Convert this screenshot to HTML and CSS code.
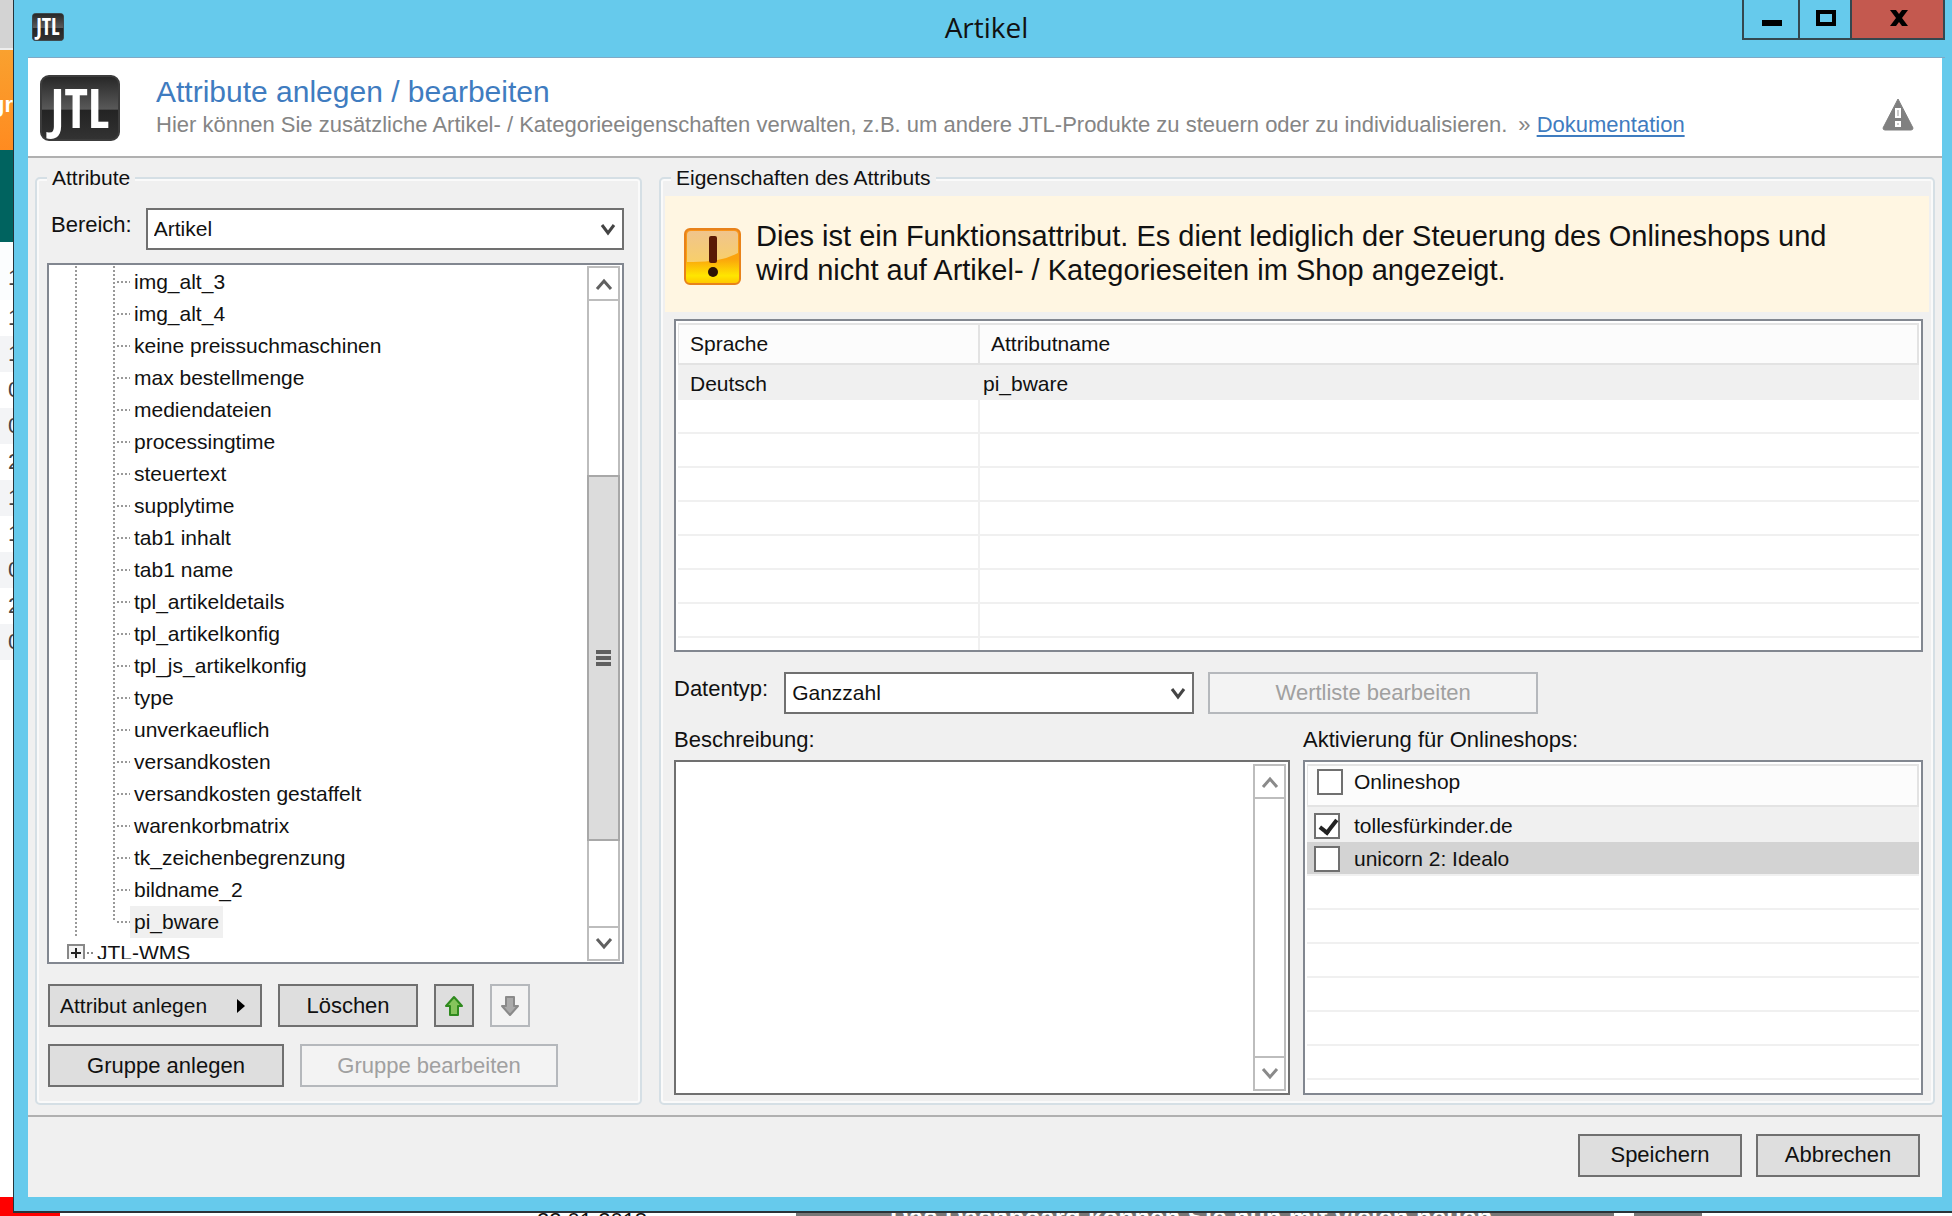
FILE: index.html
```html
<!DOCTYPE html>
<html lang="de">
  <head>
    <meta charset="utf-8" />
    <title>Artikel</title>
    <link rel="stylesheet" href="styles.css">
  </head>
  <body>
    <div class="desktop">
      <!-- application behind the dialog, left edge -->
      <div class="behind-left">
        <div class="behind-toolbar"></div>
        <div class="behind-tab">gr</div>
        <div class="behind-head"></div>
        <div class="behind-filter">1</div>
        <div class="behind-rows">
          <div>1</div>
          <div>1</div>
          <div>0</div>
          <div>0</div>
          <div>2</div>
          <div>1</div>
          <div>1</div>
          <div>0</div>
          <div>2</div>
          <div>0</div>
        </div>
        <div class="behind-red"></div>
      </div>

      <div class="window">
        <div class="titlebar">
          <svg class="app-icon" viewBox="0 0 80 66" preserveAspectRatio="none">
            <use href="#jtl-tile" />
            <text class="logo-text" x="40" y="53" text-anchor="middle">JTL</text>
          </svg>
          <div class="title">Artikel</div>
          <div class="window-buttons">
            <button class="win-min" aria-label="Minimieren">
              <svg width="22" height="18"><rect x="1" y="11" width="20" height="6" /></svg>
            </button>
            <button class="win-max" aria-label="Maximieren">
              <svg width="22" height="18"><path d="M3 3h16v12H3z" fill="none" stroke="#000" stroke-width="4" /></svg>
            </button>
            <button class="win-close" aria-label="Schließen">
              <svg width="22" height="18"><path d="M2 1h6l3 4 3-4h6l-6 8 6 8h-6l-3-4-3 4H2l6-8z" /></svg>
            </button>
          </div>
        </div>

        <div class="client">
          <header class="header">
            <svg class="logo" width="80" height="66" viewBox="0 0 80 66">
              <defs>
                <linearGradient id="tile" x1="0" y1="0" x2="0" y2="1">
                  <stop offset="0" stop-color="#262626" />
                  <stop offset=".52" stop-color="#595959" />
                  <stop offset=".53" stop-color="#232323" />
                  <stop offset="1" stop-color="#333" />
                </linearGradient>
                <rect id="jtl-tile" x="1" y="1" width="78" height="64" rx="8" fill="url(#tile)" stroke="#3c3c3c" stroke-width="2" />
              </defs>
              <use href="#jtl-tile" />
              <text class="logo-text" x="40" y="53" text-anchor="middle">JTL</text>
            </svg>
            <div class="header-text">
              <h1>Attribute anlegen / bearbeiten</h1>
              <p>
                <span>Hier können Sie zusätzliche Artikel- / Kategorieeigenschaften verwalten, z.B. um andere JTL-Produkte zu steuern oder zu individualisieren.</span>
                <span>» <a href="#">Dokumentation</a></span>
              </p>
            </div>
            <svg class="warn-icon" width="32" height="33" viewBox="0 0 32 33">
              <path d="M16 1 31 30q0 2-2 2H3q-2 0-2-2z" fill="#808080" stroke="#808080" stroke-linejoin="round" />
              <path d="M13 10h6v10h-6zM13 23h6v6h-6z" fill="#fff" />
              <path d="M15 12h2v6h-2zM15 25h2v2h-2z" fill="#ccc" />
            </svg>
          </header>

          <main class="main">
            <fieldset class="group group-left">
              <legend>Attribute</legend>
              <div class="area-row">
                <label for="area">Bereich:</label>
                <div class="select">
                  <select id="area"><option>Artikel</option></select>
                  <svg width="16" height="14"><path d="M2 2l6 8 6-8" /></svg>
                </div>
              </div>

              <div class="tree-box">
                <div class="tree">
                  <ul class="tree-items">
                    <li><span>img_alt_3</span></li>
                    <li><span>img_alt_4</span></li>
                    <li><span>keine preissuchmaschinen</span></li>
                    <li><span>max bestellmenge</span></li>
                    <li><span>mediendateien</span></li>
                    <li><span>processingtime</span></li>
                    <li><span>steuertext</span></li>
                    <li><span>supplytime</span></li>
                    <li><span>tab1 inhalt</span></li>
                    <li><span>tab1 name</span></li>
                    <li><span>tpl_artikeldetails</span></li>
                    <li><span>tpl_artikelkonfig</span></li>
                    <li><span>tpl_js_artikelkonfig</span></li>
                    <li><span>type</span></li>
                    <li><span>unverkaeuflich</span></li>
                    <li><span>versandkosten</span></li>
                    <li><span>versandkosten gestaffelt</span></li>
                    <li><span>warenkorbmatrix</span></li>
                    <li><span>tk_zeichenbegrenzung</span></li>
                    <li><span>bildname_2</span></li>
                    <li><span class="selected">pi_bware</span></li>
                  </ul>
                  <div class="tree-root">
                    <svg width="30" height="18"><path d="M1 1h16v16H1z" fill="#f4f4f4" stroke="#888" stroke-width="2" /><path d="M4 9h10M9 4v10" stroke="#222" stroke-width="2" /><path d="M20 9h2M24 9h2" stroke="#888" stroke-width="2" /></svg>
                    <span>JTL-WMS</span>
                  </div>
                </div>
                <div class="scrollbar">
                  <div class="scroll-btn"><svg width="18" height="14"><path d="M2 12l7-8 7 8" /></svg></div>
                  <div class="scroll-track">
                    <div class="scroll-thumb"><i></i><i></i><i></i></div>
                  </div>
                  <div class="scroll-btn"><svg width="18" height="14"><path d="M2 2l7 8 7-8" /></svg></div>
                </div>
              </div>

              <div class="button-row">
                <button class="btn btn-menu">Attribut anlegen
                  <svg width="10" height="16"><path d="M1 1l8 7-8 7z" /></svg>
                </button>
                <button class="btn btn-delete">Löschen</button>
                <button class="btn btn-icon" aria-label="Nach oben">
                  <svg width="20" height="22"><path d="M10 2l8 9h-4v9H6v-9H2z" fill="#86c45c" stroke="#2f8a1e" stroke-width="2" stroke-linejoin="round" /></svg>
                </button>
                <button class="btn btn-icon" aria-label="Nach unten" disabled>
                  <svg width="20" height="22"><path d="M10 20l8-9h-4V2H6v9H2z" fill="#aaa" stroke="#8a8a8a" stroke-width="2" stroke-linejoin="round" /></svg>
                </button>
              </div>
              <div class="button-row">
                <button class="btn btn-group-new">Gruppe anlegen</button>
                <button class="btn btn-group-edit" disabled>Gruppe bearbeiten</button>
              </div>
            </fieldset>

            <fieldset class="group group-right">
              <legend>Eigenschaften des Attributs</legend>
              <div class="notice">
                <svg width="57" height="58" viewBox="0 0 57 58">
                  <defs>
                    <linearGradient id="amber" x1="0" y1="0" x2="0" y2="1">
                      <stop offset="0" stop-color="#f7941d" />
                      <stop offset=".55" stop-color="#fba50c" />
                      <stop offset=".85" stop-color="#ffe600" />
                      <stop offset="1" stop-color="#ffc400" />
                    </linearGradient>
                    <linearGradient id="gloss" x1="0" y1="0" x2="0" y2="1">
                      <stop offset="0" stop-color="#f0c48c" />
                      <stop offset="1" stop-color="#f8cf6a" />
                    </linearGradient>
                  </defs>
                  <rect x="1" y="1" width="55" height="55" rx="5" fill="url(#amber)" stroke="#e8821a" stroke-width="2" />
                  <path d="M3 7q0-4 4-4h43q4 0 4 4v18q-18 10-51 9z" fill="url(#gloss)" />
                  <rect x="25" y="8" width="8" height="27" rx="2" fill="#5a1a06" />
                  <circle cx="29" cy="44" r="5" fill="#2c1205" />
                </svg>
                <p>Dies ist ein Funktionsattribut. Es dient lediglich der Steuerung des Onlineshops und<br>wird nicht auf Artikel- / Kategorieseiten im Shop angezeigt.</p>
              </div>

              <div class="props">
                <div class="grid-box names-box">
                  <table class="names">
                    <thead>
                      <tr><th class="col-lang">Sprache</th><th>Attributname</th></tr>
                    </thead>
                    <tbody>
                      <tr class="current"><td>Deutsch</td><td>pi_bware</td></tr>
                      <tr><td></td><td></td></tr>
                      <tr><td></td><td></td></tr>
                      <tr><td></td><td></td></tr>
                      <tr><td></td><td></td></tr>
                      <tr><td></td><td></td></tr>
                      <tr><td></td><td></td></tr>
                      <tr><td></td><td></td></tr>
                      <tr><td></td><td></td></tr>
                    </tbody>
                  </table>
                </div>

                <div class="type-row">
                  <label for="datatype">Datentyp:</label>
                  <div class="select">
                    <select id="datatype"><option>Ganzzahl</option></select>
                    <svg width="16" height="14"><path d="M2 2l6 8 6-8" /></svg>
                  </div>
                  <button class="btn btn-values" disabled>Wertliste bearbeiten</button>
                </div>

                <div class="lower">
                  <div class="lower-col">
                    <label for="description">Beschreibung:</label>
                    <div class="memo">
                      <textarea id="description"></textarea>
                      <div class="scrollbar scrollbar-off">
                        <div class="scroll-btn"><svg width="18" height="14"><path d="M2 12l7-8 7 8" /></svg></div>
                        <div class="scroll-track"></div>
                        <div class="scroll-btn"><svg width="18" height="14"><path d="M2 2l7 8 7-8" /></svg></div>
                      </div>
                    </div>
                  </div>
                  <div class="lower-col">
                    <div class="caption">Aktivierung für Onlineshops:</div>
                    <div class="grid-box shops-box">
                      <table class="shops">
                        <thead>
                          <tr><th><label><input type="checkbox">Onlineshop</label></th></tr>
                        </thead>
                        <tbody>
                          <tr class="current"><td><label><input type="checkbox" checked>tollesfürkinder.de</label></td></tr>
                          <tr class="marked"><td><label><input type="checkbox">unicorn 2: Idealo</label></td></tr>
                          <tr><td></td></tr>
                          <tr><td></td></tr>
                          <tr><td></td></tr>
                          <tr><td></td></tr>
                          <tr><td></td></tr>
                          <tr><td></td></tr>
                          <tr><td></td></tr>
                        </tbody>
                      </table>
                    </div>
                  </div>
                </div>
              </div>
            </fieldset>
          </main>

          <footer class="footer">
            <button class="btn">Speichern</button>
            <button class="btn">Abbrechen</button>
          </footer>
        </div>
      </div>
    </div>

    <!-- application behind the dialog, bottom edge -->
    <div class="behind-bottom">
      <div class="strip-red"></div>
      <div class="strip-white"><span>22.01.2018</span></div>
      <div class="strip-gray">Das Dashboard können Sie nun mit vielen neuen</div>
      <div class="strip-gap"></div>
      <div class="strip-gray strip-short"></div>
      <div class="strip-rest"></div>
    </div>
  </body>
</html>
```
FILE: styles.css
```css
* {
  box-sizing: border-box;
}

body {
  margin: 0;
  height: 100vh;
  display: flex;
  flex-direction: column;
  overflow: hidden;
  font-family: "Liberation Sans", Arial, sans-serif;
  font-size: 22px;
  line-height: 24px;
  color: #111;
  background: #fff;
}

button,
select,
textarea {
  font: inherit;
  color: inherit;
}

/* background application */
.desktop {
  flex: 1;
  min-height: 0;
  display: flex;
}

.behind-left {
  width: 13px;
  flex: none;
  display: flex;
  flex-direction: column;
  overflow: hidden;
  color: #444;
}

.behind-toolbar {
  height: 50px;
  background: #d3d3d3;
  border-bottom: 2px solid #eee;
}

.behind-tab {
  height: 100px;
  display: flex;
  align-items: center;
  justify-content: flex-end;
  padding-top: 10px;
  background: linear-gradient(#f9a12f, #ff8b20);
  color: #fff;
  font-weight: bold;
}

.behind-head {
  height: 92px;
  background: #00635f;
}

.behind-filter {
  height: 58px;
  padding: 24px 0 0 8px;
  background: #fbfdfe;
}

.behind-rows {
  flex: 1;
}

.behind-rows div {
  height: 36px;
  line-height: 36px;
  padding-left: 8px;
}

.behind-rows div:nth-child(even) {
  background: #f3f4f6;
}

.behind-red {
  height: 16px;
  background: #f00;
}

.behind-bottom {
  height: 3px;
  flex: none;
  display: flex;
  overflow: hidden;
  line-height: 16px;
}

.strip-red {
  width: 60px;
  background: #f00;
}

.strip-white {
  width: 736px;
  padding-left: 477px;
}

.strip-gray {
  flex: 1;
  padding-left: 94px;
  background: #777;
  color: #fff;
  font-size: 26px;
  font-weight: bold;
  line-height: 8px;
}

.strip-gap {
  width: 20px;
}

.strip-short {
  flex: none;
  width: 68px;
  padding: 0;
}

.strip-rest {
  width: 250px;
}

/* window */
.window {
  flex: 1;
  min-width: 0;
  display: flex;
  flex-direction: column;
  padding: 0 10px 14px 14px;
  background: #66caec;
  border-left: 1px solid #26343a;
  border-bottom: 2px solid #2b3338;
}

.titlebar {
  height: 58px;
  flex: none;
  display: grid;
  grid-template-columns: 1fr auto 1fr;
  align-items: center;
  border-bottom: 1px solid #7fa9c6;
  margin-right: -3px;
}

.app-icon {
  width: 32px;
  height: 28px;
  margin: 0 0 4px 4px;
}

.title {
  font-family: "Open Sans", sans-serif;
  font-size: 28px;
  line-height: 52px;
  padding-bottom: 4px;
}

.window-buttons {
  align-self: start;
  justify-self: end;
  display: flex;
  height: 40px;
  border: 2px solid #34474f;
  border-top: 0;
}

.window-buttons button {
  width: 52px;
  padding: 0 0 2px 2px;
  border: 0;
  border-right: 2px solid #34474f;
  background: none;
  display: flex;
  align-items: center;
  justify-content: center;
}

.window-buttons .win-min {
  width: 56px;
}

.window-buttons .win-close {
  width: 91px;
  border-right: 0;
  background: #c4594f;
}

.client {
  flex: 1;
  min-height: 0;
  display: flex;
  flex-direction: column;
  background: #f0f0f0;
}

/* header */
.header {
  height: 100px;
  flex: none;
  display: flex;
  align-items: center;
  gap: 36px;
  padding: 2px 28px 0 12px;
  background: #fff;
  border-bottom: 2px solid #b0b0b0;
}

.logo-text {
  font-family: "Open Sans Condensed", "Roboto Condensed", "Liberation Sans Narrow", "Liberation Sans", sans-serif;
  font-weight: bold;
  font-size: 54px;
  fill: #fff;
}

.header-text {
  flex: 1;
}

.header h1 {
  margin: 0;
  font-size: 30px;
  font-weight: normal;
  line-height: 34px;
  color: #3f7cc0;
}

.header p {
  display: flex;
  gap: 11px;
  margin: 0;
  line-height: 32px;
  color: #858585;
}

.header a {
  color: #3f7cc0;
  text-underline-offset: 3px;
}

.warn-icon {
  margin-top: 12px;
}

/* group boxes */
.main {
  flex: 1;
  min-height: 0;
  display: flex;
  gap: 17px;
  padding: 8px 7px 10px;
}

.group {
  min-width: 0;
  margin: 0;
  border: 2px solid #d5dfe5;
  border-radius: 5px;
  box-shadow: inset 0 0 0 2px #fafafa;
  display: flex;
  flex-direction: column;
  font-size: 21px;
}

.group legend {
  padding: 0 5px;
  background: #f0f0f0;
}

.group-left {
  width: 607px;
  flex: none;
  padding: 18px 16px 16px 10px;
}

.group-right {
  flex: 1;
  padding: 6px 4px 8px;
}

.group-right legend {
  margin-left: 6px;
}

.group label,
.caption {
  font-size: 22px;
}

.select {
  position: relative;
  flex: 1;
}

.select select {
  display: block;
  width: 100%;
  height: 42px;
  padding: 0 6px;
  appearance: none;
  background: #fff;
  border: 2px solid #707070;
  border-radius: 0;
}

.select svg {
  position: absolute;
  right: 8px;
  top: 15px;
  fill: none;
  stroke: #444;
  stroke-width: 3;
  pointer-events: none;
}

.area-row {
  display: flex;
  gap: 14px;
  padding-left: 4px;
}

.area-row label,
.type-row label {
  padding-top: 5px;
}

/* tree */
.tree-box {
  flex: 1;
  min-height: 0;
  display: flex;
  margin: 13px 0 20px;
  padding: 1px 2px 1px 1px;
  background: #fff;
  border: 2px solid #828790;
}

.tree {
  flex: 1;
  overflow: hidden;
  margin-bottom: 2px;
}

/* connector lines */
.tree-items,
.tree-items li {
  background: repeating-linear-gradient(#999 0 2px, #fff 2px 4px) 0 0 / 2px 100% no-repeat;
}

.tree-items {
  list-style: none;
  margin: 0 0 0 25px;
  padding: 0 0 0 38px;
}

.tree-items li {
  height: 32px;
  display: flex;
  align-items: center;
  padding-left: 2px;
}

.tree-items li:last-child {
  background-size: 2px 50%;
}

.tree-items li::before {
  content: "";
  width: 15px;
  height: 2px;
  background: repeating-linear-gradient(90deg, #fff 0 2px, #999 2px 4px);
}

.tree-items span {
  padding: 0 4px;
  line-height: 32px;
}

.tree-items .selected {
  background: #f0f0f0;
}

.tree-root {
  display: flex;
  align-items: center;
  padding: 3px 0 0 17px;
}

/* scrollbars */
.scrollbar {
  width: 33px;
  flex: none;
  display: flex;
  flex-direction: column;
  border: 2px solid #bdbdbd;
}

.scroll-btn {
  height: 31px;
  display: flex;
  align-items: center;
  justify-content: center;
}

.scroll-btn svg {
  fill: none;
  stroke: #606060;
  stroke-width: 3;
}

.scrollbar-off .scroll-btn svg {
  stroke: #8a8a8a;
}

.scroll-track {
  flex: 1;
  display: flex;
  flex-direction: column;
  border: solid #bdbdbd;
  border-width: 2px 0;
}

.scroll-track::before {
  content: "";
  flex: 175;
}

.scroll-track::after {
  content: "";
  flex: 86;
}

.scroll-thumb {
  flex: 364;
  display: flex;
  flex-direction: column;
  align-items: center;
  justify-content: center;
  gap: 2px;
  margin: 0 -2px;
  background: #dcdcdc;
  border: 2px solid #a8a8a8;
}

.scroll-thumb i {
  width: 15px;
  height: 4px;
  background: #606060;
}

/* buttons */
.btn {
  height: 43px;
  padding: 0 8px;
  background: #dedede;
  border: 2px solid #707070;
  border-radius: 0;
  font-size: 22px;
  text-align: center;
}

.btn:disabled {
  color: #a0a0a0;
  background: #f3f3f3;
  border-color: #b5b8bc;
}

.button-row {
  display: flex;
  gap: 16px;
  padding-left: 1px;
}

.button-row + .button-row {
  margin-top: 17px;
}

.btn-menu {
  width: 214px;
  display: flex;
  align-items: center;
  justify-content: space-between;
  padding: 0 14px 0 10px;
  font-size: 21px;
}

.btn-delete {
  width: 140px;
}

.btn-icon {
  width: 40px;
  display: flex;
  align-items: center;
  justify-content: center;
}

.btn-group-new {
  width: 236px;
}

.btn-group-edit {
  width: 258px;
}

/* notice */
.notice {
  height: 116px;
  flex: none;
  display: flex;
  align-items: center;
  gap: 15px;
  padding: 6px 19px 0;
  background: #fff6e2;
}

.notice p {
  margin: 0 0 8px;
  font-size: 29px;
  line-height: 34px;
  white-space: nowrap;
}

.props {
  flex: 1;
  min-height: 0;
  display: flex;
  flex-direction: column;
  padding: 7px 6px 0 9px;
}

/* grids */
.grid-box {
  overflow: hidden;
  padding: 2px;
  background: #fff;
  border: 2px solid #828790;
}

.names-box {
  height: 333px;
  flex: none;
}

.grid-box table {
  width: 100%;
  table-layout: fixed;
  border-collapse: separate;
  border-spacing: 0;
}

.grid-box th {
  height: 42px;
  padding: 0 11px;
  background: #fcfcfc;
  border: 2px solid #e3e3e3;
  border-left-width: 0;
  font-weight: normal;
  text-align: left;
}

.grid-box th:first-child {
  border-left-width: 1px;
}

.grid-box td {
  height: 34px;
  padding: 0 12px;
  border-bottom: 2px solid #f0f0f0;
}

.names .col-lang {
  width: 302px;
}

.names td + td {
  padding-left: 3px;
}

.names td:first-child {
  border-right: 2px solid #f0f0f0;
}

.grid-box .current td {
  height: 35px;
  padding-top: 4px;
  background: #f0f0f0;
}

.grid-box .marked td {
  padding-top: 2px;
  background: #d3d3d3;
}

.grid-box label {
  display: flex;
  align-items: center;
  gap: 14px;
  font-size: 21px;
}

.shops-box {
  flex: 1;
  min-height: 0;
}

.shops td {
  padding: 0 7px;
}

.grid-box .shops th {
  height: 43px;
  padding: 0 9px 8px;
}

.shops th label {
  gap: 11px;
}

.shops input {
  width: 26px;
  height: 26px;
  margin: 0;
  appearance: none;
  background: #fff;
  border: 2px solid #707070;
}

.shops input:checked::after {
  content: "";
  display: block;
  width: 7px;
  height: 14px;
  margin: 1px 0 0 7px;
  border: solid #222;
  border-width: 0 4px 4px 0;
  transform: rotate(38deg);
}

.type-row {
  display: flex;
  gap: 14px;
  padding-top: 20px;
}

.type-row label {
  padding-right: 2px;
}

.type-row .select {
  flex: none;
  width: 410px;
}

.btn-values {
  width: 330px;
  height: 42px;
}

.lower {
  flex: 1;
  min-height: 0;
  display: flex;
  gap: 13px;
  padding-top: 14px;
}

.lower-col {
  flex: 620;
  min-width: 0;
  display: flex;
  flex-direction: column;
  gap: 8px;
}

.lower-col:first-child {
  flex: 616;
}

.memo {
  flex: 1;
  display: flex;
  padding: 2px;
  background: #fff;
  border: 2px solid #707070;
}

.memo textarea {
  flex: 1;
  border: 0;
  resize: none;
  outline: 0;
}

/* footer */
.footer {
  height: 82px;
  flex: none;
  display: flex;
  align-items: center;
  justify-content: flex-end;
  gap: 14px;
  padding: 0 22px 4px;
  border-top: 2px solid #b0b0b0;
}

.footer .btn {
  width: 164px;
}
```
